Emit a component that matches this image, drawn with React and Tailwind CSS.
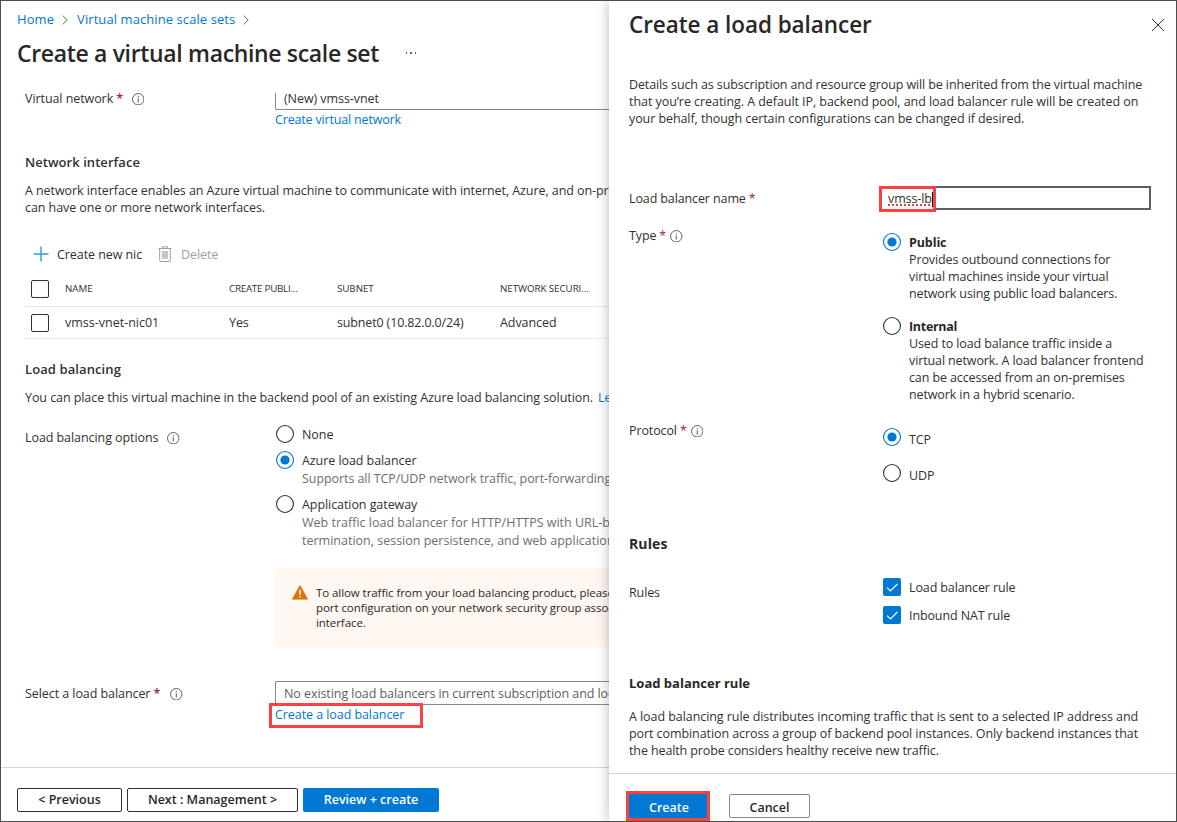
import React from "react";

function InfoIcon({ className = "" }) {
  return (
    <svg className={`size-[12.5px] shrink-0 ${className}`} viewBox="0 0 12 12" fill="none" stroke="#605e5c">
      <circle cx="6" cy="6" r="5.5" strokeWidth="0.95" />
      <path d="M6 5v4M6 2.9v1.1" strokeWidth="1" />
    </svg>
  );
}

function Chevron() {
  return (
    <svg className="h-[10px] w-[6px] shrink-0" viewBox="0 0 6 10" fill="none" stroke="#605e5c" strokeWidth="0.9">
      <path d="M0.6 0.5L5.2 5L0.6 9.5" />
    </svg>
  );
}

function Radio({ checked = false }) {
  return (
    <svg className="size-[18px] shrink-0" viewBox="0 0 18 18" fill="none">
      <circle cx="9" cy="9" r="8.45" stroke={checked ? "#0078d4" : "#323130"} strokeWidth="1.1" fill="#fff" />
      {checked && <circle cx="9" cy="9" r="4.6" fill="#0078d4" />}
    </svg>
  );
}

function Checkbox() {
  return <span className="size-[18px] shrink-0 rounded-[2px] border border-[#323130] bg-white" />;
}

function CheckedBox() {
  return (
    <span className="flex size-[18px] shrink-0 items-center justify-center rounded-[2px] bg-[#0078d4]">
      <svg className="size-[18px]" viewBox="0 0 18 18" fill="none" stroke="#fff" strokeWidth="1.1">
        <path d="M4 9.6L7.4 13L14.4 6" />
      </svg>
    </span>
  );
}

function Star({ className = "" }) {
  return <span className={`text-[#a4262c] ${className}`}>*</span>;
}

function MainBlade() {
  return (
    <main className="flex w-[608px] shrink-0 flex-col overflow-hidden whitespace-nowrap tracking-[-0.07px]">
      <nav className="flex h-[36px] shrink-0 items-center pl-4 pt-[2px] text-[13px] tracking-[0.08px] text-[#0078d4]">
        <span>Home</span>
        <span className="ml-[8px] mr-[9px] flex"><Chevron /></span>
        <span>Virtual machine scale sets</span>
        <span className="ml-2 flex"><Chevron /></span>
      </nav>
      <header className="flex h-[32px] shrink-0 items-center pl-4">
        <h1 className="text-[23px] font-semibold tracking-[-0.34px] text-[#292827]">Create a virtual machine scale set</h1>
        <span className="ml-[27px] flex gap-[3px]">
          <i className="size-[1.5px] bg-[#605e5c]" />
          <i className="size-[1.5px] bg-[#605e5c]" />
          <i className="size-[1.5px] bg-[#605e5c]" />
        </span>
      </header>

      <section className="mt-[24px] flex h-[697px] flex-col overflow-hidden pl-6">
        <div className="flex h-[17px] shrink-0 leading-[12px]">
          <div className="flex h-[12px] w-[250px] shrink-0 items-center">
            Virtual network<Star className="ml-[3px] font-semibold" /><InfoIcon className="ml-[9px]" />
          </div>
          <div className="flex grow items-center rounded-bl-[2px] border-b border-l border-[#8a8886] pb-[4px] pl-2">
            (New) vmss-vnet
          </div>
        </div>
        <a className="ml-[250px] mt-[1px] h-[18px] leading-[18px] tracking-[-0.17px] text-[#0078d4]">Create virtual network</a>

        <h2 className="mt-[23px] h-[20px] text-[13px] leading-[20px] font-semibold tracking-[0.05px]">Network interface</h2>
        <p className="mt-[10px] h-[34px] leading-[17px]">
          A network interface enables an Azure virtual machine to communicate with internet, Azure, and on-premises resources.<br />
          can have one or more network interfaces.
        </p>

        <div className="mt-[28px] flex h-[22px] items-center pl-[8px]">
          <svg className="-mt-[2px] size-4" viewBox="0 0 16 16" stroke="#3a96dd" strokeWidth="1.4"><path d="M8 0.5v15M0.5 8h15" /></svg>
          <span className="ml-[8px] w-[101px]">Create new nic</span>
          <svg className="-mt-[2px] h-4 w-[14px]" viewBox="0 0 14 16" fill="none" stroke="#a19f9d">
            <path d="M0.5 2.5h13M4.5 2.5V0.8h5v1.7M1.7 2.5v11.6q0 1.4 1.2 1.4h8.2q1.2 0 1.2-1.4V2.5" />
            <path d="M4 5h6v8H4z" fill="#c8c6c4" stroke="none" />
          </svg>
          <span className="ml-[9px] text-[#a19f9d]">Delete</span>
        </div>

        <div className="mt-[6px] grid h-[35px] shrink-0 grid-cols-[40px_164px_108px_163px_110px] items-center border-b border-[#e5e5e5] text-[9.8px]">
          <span className="flex pl-[6px]"><Checkbox /></span>
          <span>NAME</span>
          <span className="tracking-[-0.25px]">CREATE PUBLI...</span>
          <span>SUBNET</span>
          <span className="tracking-[-0.08px]">NETWORK SECURI...</span>
        </div>
        <div className="grid h-[32px] shrink-0 grid-cols-[40px_164px_108px_163px_110px] items-center border-b border-[#edebe9]">
          <span className="flex pl-[6px] pt-px"><Checkbox /></span>
          <span className="pt-[2px] tracking-normal">vmss-vnet-nic01</span>
          <span className="pt-[2px]">Yes</span>
          <span className="pt-[2px] tracking-[-0.15px]">subnet0 (10.82.0.0/24)</span>
          <span className="pt-[2px]">Advanced</span>
        </div>

        <h2 className="mt-[20px] h-[20px] text-[13px] leading-[20px] font-semibold tracking-[0.1px]">Load balancing</h2>
        <p className="mt-[9px] h-[20px] leading-[20px]">
          You can place this virtual machine in the backend pool of an existing Azure load balancing solution.
          <a className="ml-[5px] text-[#0078d4]">Learn more</a>
        </p>

        <div className="mt-[17px] flex h-[124px] shrink-0">
          <div className="mt-[4px] flex h-[18px] w-[251px] shrink-0 items-center">
            Load balancing options<InfoIcon className="ml-[9px]" />
          </div>
          <div className="flex flex-col">
            <div className="flex h-[18px] items-center gap-[8px]"><Radio /><span className="pt-[2px]">None</span></div>
            <div className="mt-[8px] flex h-[18px] items-center gap-[8px]"><Radio checked /><span className="pt-[2px]">Azure load balancer</span></div>
            <p className="ml-[26px] h-[18px] pt-px leading-[18px] text-[#706e6c]">Supports all TCP/UDP network traffic, port-forwarding, and outbound</p>
            <div className="mt-[8px] flex h-[18px] items-center gap-[8px]"><Radio /><span className="pt-[2px]">Application gateway</span></div>
            <p className="ml-[26px] h-[36px] pt-px leading-[18px] text-[#706e6c]">
              <span className="tracking-[0px]">Web traffic load balancer for HTTP/HTTPS with URL-based routing, SSL</span><br />
              <span className="tracking-[0px]">termination, session persistence, and web application firewall.</span>
            </p>
          </div>
        </div>

        <div className="ml-[250px] mt-[19px] flex h-[79px] w-[500px] shrink-0 rounded-[2px] bg-[#fff7f1] pl-[17px] pt-[17px] text-[11.5px] text-[#292827]">
          <svg className="size-4" viewBox="0 0 16 16">
            <path d="M8 0.3L15.8 14.3H0.2Z" fill="#db7500" stroke="#db7500" strokeWidth="0.5" strokeLinejoin="round" />
            <path d="M8 4.8v4.9M8 11v1.6" stroke="#fff" strokeWidth="1.5" />
          </svg>
          <p className="ml-[8px] leading-[15px]">
            To allow traffic from your load balancing product, please update the<br />
            port configuration on your network security group associated with the<br />
            interface.
          </p>
        </div>

        <div className="mt-[34px] flex h-[24px] shrink-0">
          <div className="flex w-[250px] shrink-0 items-center pt-[2px]">
            Select a load balancer<Star className="ml-[3px] font-semibold" /><InfoIcon className="ml-[10px]" />
          </div>
          <div className="flex grow items-center rounded-l-[2px] border border-r-0 border-[#8a8886] pl-2 pt-[2px] text-[#605e5c]">
            No existing load balancers in current subscription and location
          </div>
        </div>
        <div className="relative z-10 -mt-[2px] ml-[244px] flex h-[25px] w-[154px] shrink-0 items-center border-[3px] border-[#fb4141] bg-white pl-[3px] text-[#0078d4]">
          Create a load balancer
        </div>
      </section>

      <footer className="-mt-[23px] flex grow gap-[5px] border-t border-[#d6d6d6] pl-4 pt-[20px] font-semibold tracking-normal text-[#292827]">
        <button className="h-[24px] w-[105px] rounded-[2px] border border-[#323130]">&lt; Previous</button>
        <button className="h-[24px] w-[171px] rounded-[2px] border border-[#323130]">Next : Management &gt;</button>
        <button className="h-[24px] w-[136px] rounded-[2px] bg-[#0078d4] text-white">Review + create</button>
      </footer>
    </main>
  );
}

function LoadBalancerPanel() {
  return (
    <aside className="relative z-20 flex grow flex-col whitespace-nowrap bg-white tracking-[-0.115px] shadow-[0_0_12px_rgba(0,0,0,0.28)]">
      <header className="flex h-[48px] shrink-0 items-center justify-between pl-5 pr-[12px]">
        <h1 className="text-[22.5px] font-semibold tracking-[-0.06px] text-[#292827]">Create a load balancer</h1>
        <svg className="size-[12px]" viewBox="0 0 12 12" stroke="#323130" strokeWidth="1"><path d="M0 0L12 12M12 0L0 12" /></svg>
      </header>
      <section className="flex h-[724px] shrink-0 flex-col pl-5">
        <p className="mt-[27px] h-[51px] leading-[17px]">
          Details such as subscription and resource group will be inherited from the virtual machine<br />
          <span className="tracking-[-0.055px]">that you’re creating. A default IP, backend pool, and load balancer rule will be created on</span><br />
          <span className="tracking-[-0.08px]">your behalf, though certain configurations can be changed if desired.</span>
        </p>
        <div className="mt-[59px] flex h-[26px] shrink-0">
          <div className="flex h-[25px] w-[250px] shrink-0 items-center pt-[2px]">Load balancer name<Star className="ml-[3px]" /></div>
          <div className="flex h-[24px] w-[272px] border-2 border-[#605e5c]">
            <div className="-ml-[2px] -mt-[2px] flex h-[26px] w-[57px] shrink-0 items-center border-[3px] border-[#fb4141] bg-white pl-[6px]">
              <span className="underline decoration-[#e04040] decoration-dotted decoration-[1.5px] underline-offset-[2px]">vmss-lb</span>
              <i className="h-[15px] w-px bg-black" />
            </div>
          </div>
        </div>
        <div className="mt-[21px] flex h-[170px] shrink-0">
          <div className="-mt-[7px] flex h-[20px] w-[254px] shrink-0 items-center">Type<Star className="ml-[3px]" /><InfoIcon className="ml-[4px]" /></div>
          <div className="flex flex-col">
            <div className="flex h-[69px] gap-[8px]">
              <Radio checked />
              <p className="pt-px leading-[17px]"><b className="tracking-[-0.1px] text-[#292827]">Public</b><br />Provides outbound connections for<br />virtual machines inside your virtual<br />network using public load balancers.</p>
            </div>
            <div className="mt-[15px] flex gap-[8px]">
              <Radio />
              <p className="pt-px leading-[17px]"><b className="tracking-[-0.3px] text-[#292827]">Internal</b><br />Used to load balance traffic inside a<br />virtual network. A load balancer frontend<br />can be accessed from an on-premises<br />network in a hybrid scenario.</p>
            </div>
          </div>
        </div>
        <div className="mt-[25px] flex h-[54px] shrink-0">
          <div className="-mt-[7px] flex h-[20px] w-[254px] shrink-0 items-center">Protocol<Star className="ml-[3px]" /><InfoIcon className="ml-[4px]" /></div>
          <div className="flex flex-col gap-[18px]">
            <div className="flex h-[18px] gap-[8px]"><Radio checked /><span className="pt-[3px] leading-[18px]">TCP</span></div>
            <div className="flex h-[18px] gap-[8px]"><Radio /><span className="pt-[3px] leading-[18px]">UDP</span></div>
          </div>
        </div>
        <h2 className="mt-[51px] h-[22px] text-[14px] leading-[22px] font-bold tracking-[0.1px] text-[#292827]">Rules</h2>
        <div className="mt-[23px] flex h-[46px] shrink-0">
          <div className="mt-[5px] flex h-[20px] w-[254px] shrink-0 items-center">Rules</div>
          <div className="flex flex-col gap-[10px]">
            <div className="flex h-[18px] items-center gap-[8px]"><CheckedBox /><span className="pt-[2px]">Load balancer rule</span></div>
            <div className="flex h-[18px] items-center gap-[8px]"><CheckedBox /><span className="pt-[2px]">Inbound NAT rule</span></div>
          </div>
        </div>
        <h3 className="mt-[49px] h-[20px] text-[13px] leading-[20px] font-bold tracking-[0px] text-[#292827]">Load balancer rule</h3>
        <p className="mt-[15px] h-[51px] leading-[17px]">
          <span className="tracking-[-0.065px]">A load balancing rule distributes incoming traffic that is sent to a selected IP address and</span><br />
          <span className="tracking-[-0.08px]">port combination across a group of backend pool instances. Only backend instances that</span><br />
          the health probe considers healthy receive new traffic.
        </p>
      </section>
      <footer className="flex grow items-start gap-[19px] border-t border-[#d2d0ce] pl-[17px] pt-[17px] tracking-normal">
        <button className="h-[30px] w-[84px] border-[3px] border-[#fb4141] bg-[#0078d4] pl-[2px] pt-[4px] font-semibold text-white">Create</button>
        <button className="mt-[3px] h-[24px] w-[81px] rounded-[2px] border border-[#8a8886] pt-[4px] font-semibold leading-[18px] text-[#292827]">Cancel</button>
      </footer>
    </aside>
  );
}

export default function App() {
  return (
    <div className="flex h-[822px] w-[1177px] overflow-hidden border border-[#504b4d] bg-white font-['Open_Sans','Noto_Sans',sans-serif] text-[12.5px] text-[#323130]">
      <MainBlade />
      <LoadBalancerPanel />
    </div>
  );
}
